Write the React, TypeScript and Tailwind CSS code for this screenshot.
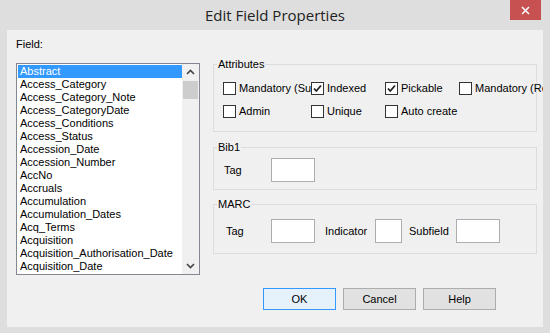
import React from "react";

const fields = [
  "Abstract",
  "Access_Category",
  "Access_Category_Note",
  "Access_CategoryDate",
  "Access_Conditions",
  "Access_Status",
  "Accession_Date",
  "Accession_Number",
  "AccNo",
  "Accruals",
  "Accumulation",
  "Accumulation_Dates",
  "Acq_Terms",
  "Acquisition",
  "Acquisition_Authorisation_Date",
  "Acquisition_Date",
];

function Check({ label, checked = false, w }: { label: string; checked?: boolean; w: string }) {
  return (
    <div className={`flex shrink-0 items-center gap-[3px] overflow-hidden whitespace-nowrap leading-[13px] ${w}`}>
      <span className="flex h-[13px] w-[13px] shrink-0 items-center justify-center border border-[#333] bg-white">
        {checked && (
          <svg width="11" height="11" viewBox="0 0 11 11">
            <path d="M2 5.5 L4.3 8 L9 2.5" fill="none" stroke="#222" strokeWidth="1.8" />
          </svg>
        )}
      </span>
      <span>{label}</span>
    </div>
  );
}

function Box({ w }: { w: string }) {
  return <div className={`h-[24px] border border-[#abadb3] bg-white ${w}`} />;
}

function Group({ title, children, h }: { title: string; children: React.ReactNode; h: string }) {
  return (
    <div className={`relative border border-[#dcdcdc] ${h}`}>
      <span className="absolute left-[3px] top-[-8px] bg-[#f0f0f0] px-[1px] leading-[14px]">{title}</span>
      {children}
    </div>
  );
}

export default function App() {
  return (
    <div
      className="flex h-[333px] w-[550px] flex-col bg-[#dedede] text-[11px] text-black"
      style={{ fontFamily: "'Liberation Sans', Arial, sans-serif" }}
    >
      {/* title bar */}
      <div className="relative flex h-[30px] shrink-0 items-center justify-center">
        <span className="text-[15px] text-[#222]" style={{ fontFamily: "'Open Sans', sans-serif" }}>
          Edit Field Properties
        </span>
        <div className="absolute right-[9px] top-0 flex h-[20px] w-[31px] items-center justify-center bg-[#c75050]">
          <svg width="9" height="9" viewBox="0 0 9 9">
            <path d="M1 1 L8 8 M8 1 L1 8" stroke="#fff" strokeWidth="1.5" />
          </svg>
        </div>
      </div>

      {/* client area */}
      <div className="mx-[7px] mb-[6px] flex flex-1 overflow-hidden bg-[#f0f0f0]">
        {/* left column */}
        <div className="flex w-[206px] shrink-0 flex-col pl-[9px] pt-[7px]">
          <div className="h-[14px] leading-[14px]">Field:</div>
          <div className="mt-[12px] flex h-[212px] w-[184px] border border-[#828790] bg-white">
            <div className="flex flex-1 flex-col pl-[1px] pt-[1px]">
              {fields.map((f, i) => (
                <div
                  key={f}
                  className={`h-[13px] whitespace-nowrap pl-[2px] leading-[13px] ${
                    i === 0 ? "bg-[#3399ff] text-white" : ""
                  }`}
                >
                  {f}
                </div>
              ))}
            </div>
            <div className="flex w-[17px] flex-col items-center bg-[#f0f0f0]">
              <svg className="mt-[5px]" width="9" height="6" viewBox="0 0 9 6">
                <path d="M1 5 L4.5 1.5 L8 5" fill="none" stroke="#444" strokeWidth="1.6" />
              </svg>
              <div className="mt-[6px] h-[18px] w-[15px] bg-[#cdcdcd]" />
              <div className="flex-1" />
              <svg className="mb-[5px]" width="9" height="6" viewBox="0 0 9 6">
                <path d="M1 1 L4.5 4.5 L8 1" fill="none" stroke="#444" strokeWidth="1.6" />
              </svg>
            </div>
          </div>
        </div>

        {/* right column */}
        <div className="flex min-w-0 flex-1 flex-col pr-[6px] pt-[34px]">
          <Group title="Attributes" h="h-[68px]">
            <div className="flex flex-col gap-[10px] pl-[9px] pt-[17px]">
              <div className="flex">
                <Check label="Mandatory (Submission)" w="w-[88px]" />
                <Check label="Indexed" checked w="w-[74px]" />
                <Check label="Pickable" checked w="w-[74px]" />
                <Check label="Mandatory (Record)" w="w-[84px]" />
              </div>
              <div className="flex">
                <Check label="Admin" w="w-[88px]" />
                <Check label="Unique" w="w-[74px]" />
                <Check label="Auto create" w="w-[74px]" />
              </div>
            </div>
          </Group>

          <div className="mt-[15px]">
            <Group title="Bib1" h="h-[43px]">
              <div className="flex items-center pl-[10px] pt-[10px]">
                <span className="w-[47px]">Tag</span>
                <Box w="w-[44px]" />
              </div>
            </Group>
          </div>

          <div className="mt-[14px]">
            <Group title="MARC" h="h-[50px]">
              <div className="flex items-center pl-[12px] pt-[14px]">
                <span className="w-[45px]">Tag</span>
                <Box w="w-[44px]" />
                <span className="ml-[10px] w-[50px]">Indicator</span>
                <Box w="w-[27px]" />
                <span className="ml-[7px] w-[47px]">Subfield</span>
                <Box w="w-[44px]" />
              </div>
            </Group>
          </div>

          <div className="mt-[34px] flex gap-[7px] pl-[50px]">
            <div className="flex h-[22px] w-[73px] items-center justify-center border border-[#3399ff] bg-[#e5f1fb]">
              OK
            </div>
            <div className="flex h-[22px] w-[73px] items-center justify-center border border-[#adadad] bg-[#e1e1e1]">
              Cancel
            </div>
            <div className="flex h-[22px] w-[73px] items-center justify-center border border-[#adadad] bg-[#e1e1e1]">
              Help
            </div>
          </div>
        </div>
      </div>
    </div>
  );
}
